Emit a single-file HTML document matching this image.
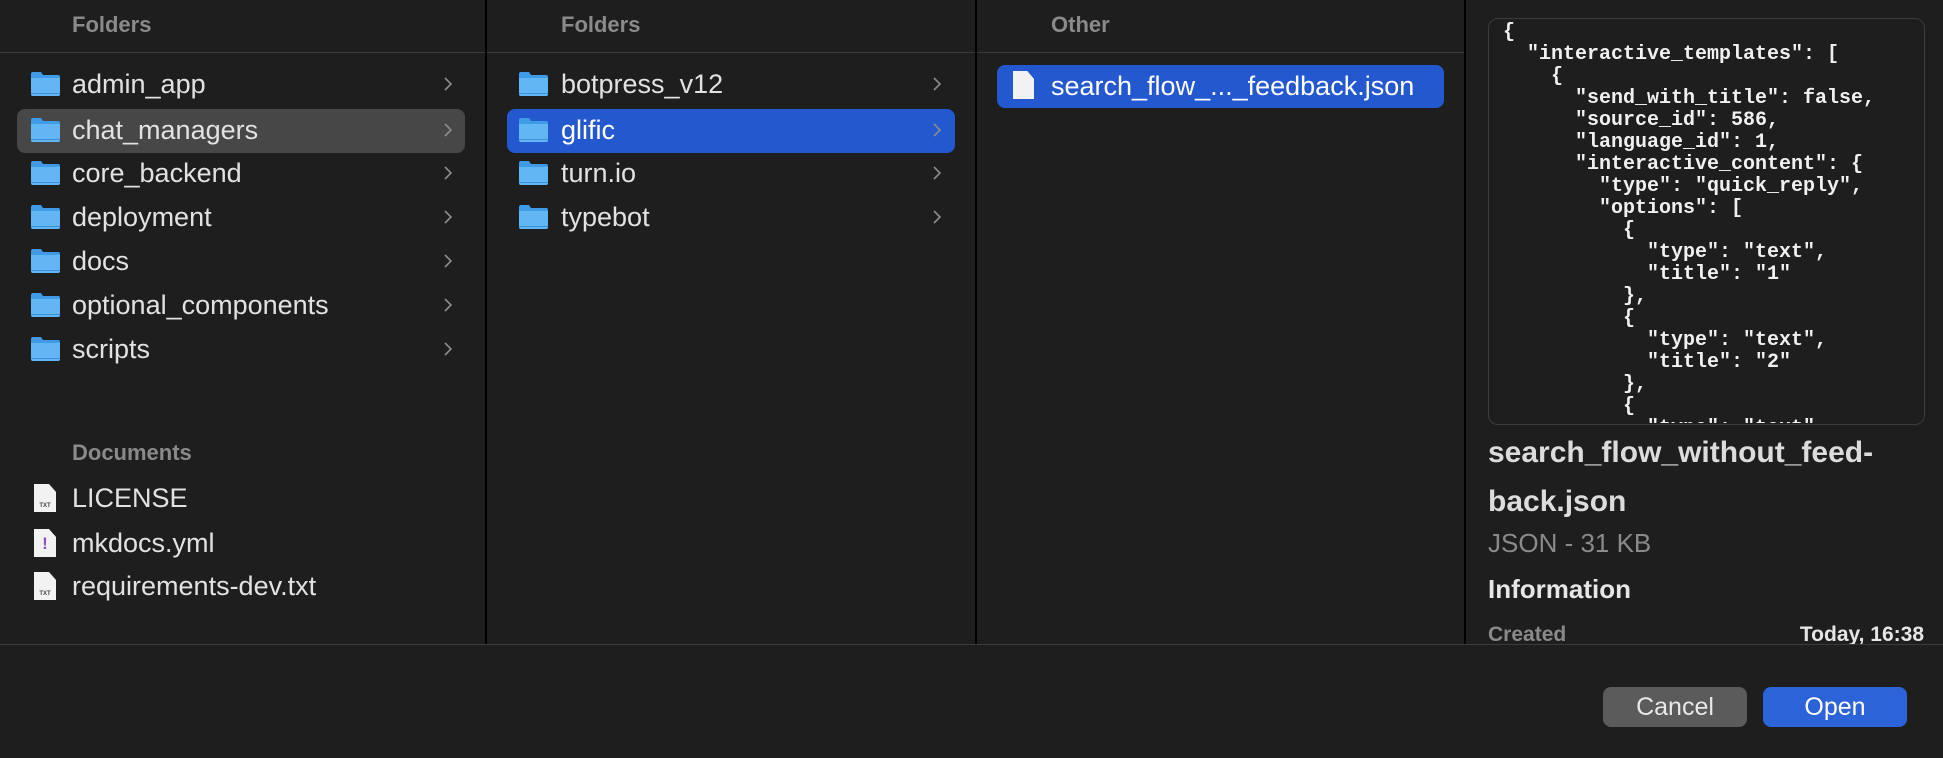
<!DOCTYPE html>
<html><head><meta charset="utf-8"><style>
*{margin:0;padding:0;box-sizing:border-box}
body{width:1943px;height:758px;background:#1e1e1e;font-family:"Liberation Sans",sans-serif;color:#e2e2e2;position:relative;overflow:hidden}
.a{position:absolute;white-space:nowrap}
.hd{font-size:22px;font-weight:bold;color:#8a8a8a}
.vl{position:absolute;top:0;height:645px;width:2px;background:#000}
.hl{position:absolute;top:52px;height:1px;background:#3a3a3a}
.row{position:absolute;height:44px;font-size:27px;line-height:44px}
.row .t{position:absolute;top:0}
.fold{position:absolute;width:29px;height:24px}
.chev{position:absolute;width:10px;height:14px}
.doc{position:absolute;width:22px;height:28px;background:#f2f2f2;clip-path:polygon(0 0,68% 0,100% 28%,100% 100%,0 100%);line-height:normal}
.doc small{position:absolute;bottom:2px;left:0;width:100%;text-align:center;font-size:6px;line-height:7px;color:#444;font-weight:bold}
pre{position:absolute;font-family:"Liberation Mono","DejaVu Sans Mono",monospace;font-weight:bold;font-size:20px;line-height:22px;color:#f0f0f0}
.btn{position:absolute;top:687px;height:40px;width:144px;border-radius:8px;font-size:25px;line-height:40px;text-align:center;color:#e8e8e8}
</style></head><body>
<svg width="0" height="0" style="position:absolute"><defs>
<symbol id="f" viewBox="0 0 29 24"><path d="M0 2 Q0 0 2 0 H10 L12 3 H27 Q29 3 29 5 V22 Q29 24 27 24 H2 Q0 24 0 22Z" fill="#3f9be6"/><path d="M0 6 H29 V22 Q29 24 27 24 H2 Q0 24 0 22Z" fill="#62b6f3"/><path d="M0 21.5 H29" stroke="#3d8fd8" stroke-width="1"/></symbol>
<symbol id="c" viewBox="0 0 10 14"><path d="M2 1 L8 7 L2 13" fill="none" stroke="#8c8c8c" stroke-width="1.6"/></symbol>
</defs></svg>

<div class="vl" style="left:485px"></div>
<div class="vl" style="left:975px"></div>
<div class="vl" style="left:1464px"></div>
<div class="hl" style="left:0;width:485px"></div>
<div class="hl" style="left:487px;width:488px"></div>
<div class="hl" style="left:977px;width:487px"></div>
<div class="a" style="left:0;top:644px;width:1943px;height:1px;background:#3a3a3a"></div>

<div class="a hd" style="left:72px;top:12px">Folders</div>
<div class="a hd" style="left:561px;top:12px">Folders</div>
<div class="a hd" style="left:1051px;top:12px">Other</div>
<div class="a hd" style="left:72px;top:440px">Documents</div>

<div class="a" style="left:17px;top:109px;width:448px;height:44px;background:#474747;border-radius:8px"></div>
<div class="a" style="left:507px;top:109px;width:448px;height:44px;background:#2358cf;border-radius:8px"></div>
<div class="a" style="left:997px;top:65px;width:447px;height:43px;background:#2358cf;border-radius:8px"></div>

<div class="row" style="left:0;top:62px;width:485px"><svg class="fold" style="left:31px;top:10px"><use href="#f"/></svg><span class="t" style="left:72px">admin_app</span><svg class="chev" style="left:443px;top:15px"><use href="#c"/></svg></div>
<div class="row" style="left:0;top:108px;width:485px"><svg class="fold" style="left:31px;top:10px"><use href="#f"/></svg><span class="t" style="left:72px">chat_managers</span><svg class="chev" style="left:443px;top:15px"><use href="#c"/></svg></div>
<div class="row" style="left:0;top:151px;width:485px"><svg class="fold" style="left:31px;top:10px"><use href="#f"/></svg><span class="t" style="left:72px">core_backend</span><svg class="chev" style="left:443px;top:15px"><use href="#c"/></svg></div>
<div class="row" style="left:0;top:195px;width:485px"><svg class="fold" style="left:31px;top:10px"><use href="#f"/></svg><span class="t" style="left:72px">deployment</span><svg class="chev" style="left:443px;top:15px"><use href="#c"/></svg></div>
<div class="row" style="left:0;top:239px;width:485px"><svg class="fold" style="left:31px;top:10px"><use href="#f"/></svg><span class="t" style="left:72px">docs</span><svg class="chev" style="left:443px;top:15px"><use href="#c"/></svg></div>
<div class="row" style="left:0;top:283px;width:485px"><svg class="fold" style="left:31px;top:10px"><use href="#f"/></svg><span class="t" style="left:72px">optional_components</span><svg class="chev" style="left:443px;top:15px"><use href="#c"/></svg></div>
<div class="row" style="left:0;top:327px;width:485px"><svg class="fold" style="left:31px;top:10px"><use href="#f"/></svg><span class="t" style="left:72px">scripts</span><svg class="chev" style="left:443px;top:15px"><use href="#c"/></svg></div>

<div class="row" style="left:0;top:476px;width:485px"><div class="doc" style="left:34px;top:8px"><small>TXT</small></div><span class="t" style="left:72px">LICENSE</span></div>
<div class="row" style="left:0;top:521px;width:485px"><div class="doc" style="left:34px;top:8px"><small style="font-size:17px;line-height:18px;color:#8e4fc0;bottom:4px">!</small></div><span class="t" style="left:72px">mkdocs.yml</span></div>
<div class="row" style="left:0;top:564px;width:485px"><div class="doc" style="left:34px;top:8px"><small>TXT</small></div><span class="t" style="left:72px">requirements-dev.txt</span></div>

<div class="row" style="left:487px;top:62px;width:488px"><svg class="fold" style="left:32px;top:10px"><use href="#f"/></svg><span class="t" style="left:74px">botpress_v12</span><svg class="chev" style="left:445px;top:15px"><use href="#c"/></svg></div>
<div class="row" style="left:487px;top:108px;width:488px;color:#fff"><svg class="fold" style="left:32px;top:10px"><use href="#f"/></svg><span class="t" style="left:74px">glific</span><svg class="chev" style="left:445px;top:15px"><use href="#c"/></svg></div>
<div class="row" style="left:487px;top:151px;width:488px"><svg class="fold" style="left:32px;top:10px"><use href="#f"/></svg><span class="t" style="left:74px">turn.io</span><svg class="chev" style="left:445px;top:15px"><use href="#c"/></svg></div>
<div class="row" style="left:487px;top:195px;width:488px"><svg class="fold" style="left:32px;top:10px"><use href="#f"/></svg><span class="t" style="left:74px">typebot</span><svg class="chev" style="left:445px;top:15px"><use href="#c"/></svg></div>

<div class="row" style="left:977px;top:64px;width:488px;color:#fff"><div class="doc" style="left:36px;top:7px;width:21px"></div><span class="t" style="left:74px">search_flow_..._feedback.json</span></div>

<div class="a" style="left:1488px;top:18px;width:437px;height:407px;border:1.5px solid #3c3c3c;border-radius:10px"></div>
<div class="a" style="left:1490px;top:20px;width:433px;height:403px;overflow:hidden">
<pre style="left:13px;top:2px">{
  "interactive_templates": [
    {
      "send_with_title": false,
      "source_id": 586,
      "language_id": 1,
      "interactive_content": {
        "type": "quick_reply",
        "options": [
          {
            "type": "text",
            "title": "1"
          },
          {
            "type": "text",
            "title": "2"
          },
          {
            "type": "text"</pre>
</div>
<div class="a" style="left:1488px;top:428px;font-size:30px;line-height:49px;color:#dcdcdc;font-weight:bold">search_flow_without_feed-<br>back.json</div>
<div class="a" style="left:1488px;top:528px;font-size:26px;color:#8a8a8a">JSON - 31 KB</div>
<div class="a" style="left:1488px;top:574px;font-size:26px;font-weight:bold;color:#e6e6e6">Information</div>
<div class="a" style="left:1488px;top:623px;width:436px;height:21px;overflow:hidden;font-size:21px;font-weight:bold"><span style="color:#8a8a8a;position:absolute;left:0;top:0">Created</span><span style="color:#e6e6e6;position:absolute;right:0;top:0">Today, 16:38</span></div>

<div class="btn" style="left:1603px;background:#5b5b5b">Cancel</div>
<div class="btn" style="left:1763px;background:#2c63d8;color:#fff">Open</div>
</body></html>
